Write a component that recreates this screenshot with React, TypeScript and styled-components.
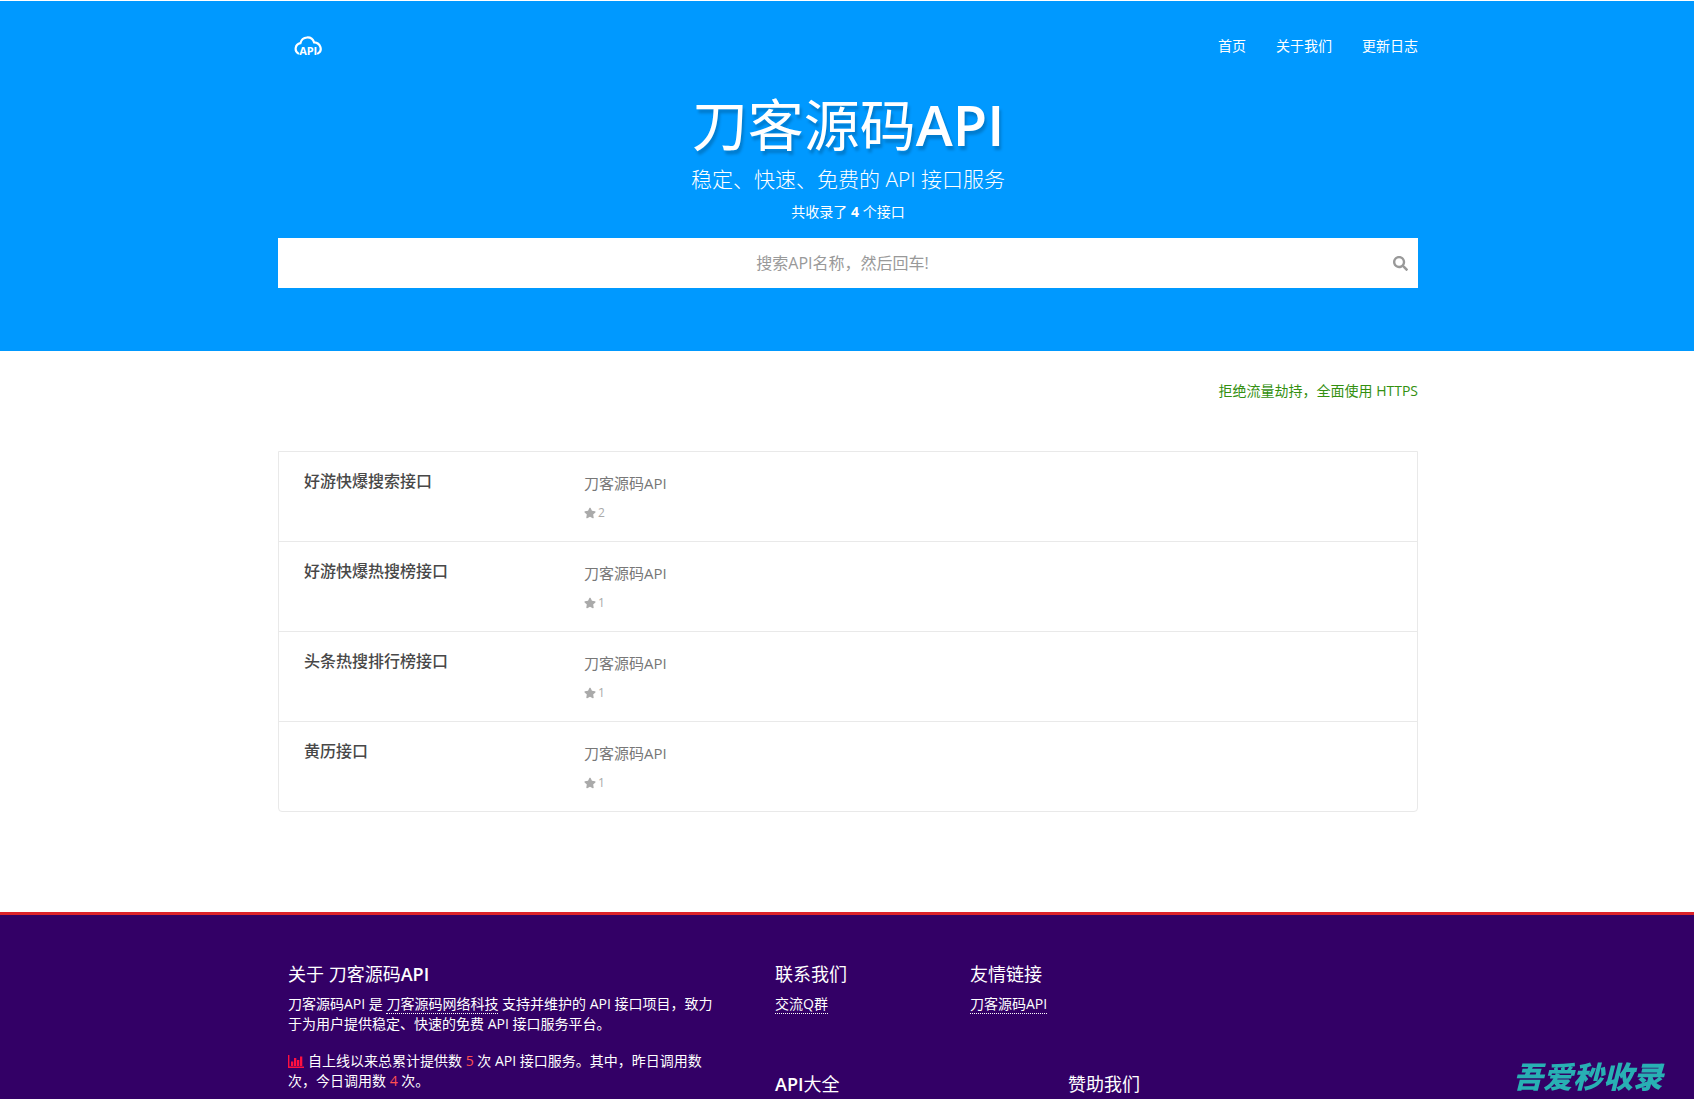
import React from "react";
import styled, { createGlobalStyle } from "styled-components";
import { FaSearch, FaStar } from "react-icons/fa";

const GlobalStyle = createGlobalStyle`
  *, *::before, *::after { box-sizing: border-box; }
  body {
    margin: 0;
    background: #fff;
    color: #444;
    font-family: "Open Sans", "Noto Sans CJK SC", sans-serif;
    font-size: 14px;
    line-height: 20px;
  }
  h1, h2, h3, p, ul { margin: 0; padding: 0; }
`;

const Page = styled.div`
  display: flex;
  flex-direction: column;
  min-height: 100vh;
`;

const Container = styled.div`
  width: 100%;
  max-width: 1142px;
  margin: 0 auto;
  padding-left: 2px;
`;

const Hero = styled.header`
  border-top: 1px solid #fff;
  padding-bottom: 63px;
  background: #0099ff;
  color: #fff;
`;

const TopBar = styled.div`
  display: flex;
  align-items: center;
  justify-content: space-between;
  height: 90px;
  padding-left: 15px;
`;

const LogoLink = styled.a`
  display: flex;
  color: #fff;
`;

const Nav = styled.nav`
  display: flex;
  gap: 30px;
`;

const NavLink = styled.a`
  color: #fff;
  text-decoration: none;
`;

const Intro = styled.div`
  display: flex;
  flex-direction: column;
  align-items: center;
  text-align: center;
`;

const Title = styled.h1`
  margin-bottom: 4px;
  font-size: 56px;
  line-height: 66px;
  font-weight: 400;
  text-shadow: 2px 4px 3px rgba(0, 0, 0, 0.2);

  span { font-weight: 600; }
`;

const Subtitle = styled.p`
  font-size: 21px;
  line-height: 36px;
  font-weight: 300;
`;

const Count = styled.p`
  line-height: 30px;
`;

const SearchForm = styled.form`
  display: flex;
  align-items: center;
  height: 50px;
  margin-top: 11px;
  padding-right: 8px;
  background: #fff;
`;

const SearchInput = styled.input`
  flex: 1;
  min-width: 0;
  height: 100%;
  padding: 0 0 0 16px;
  border: 0;
  outline: 0;
  background: transparent;
  color: #444;
  font: inherit;
  font-size: 16px;
  text-align: center;

  &::placeholder { color: #999; opacity: 1; }
`;

const SearchButton = styled.button`
  display: flex;
  padding: 2px;
  border: 0;
  background: none;
  color: #999;
  font-size: 15px;
`;

const Main = styled.main`
  flex: 1;
  padding: 30px 0 100px;
`;

const Notice = styled.p`
  margin-bottom: 50px;
  color: #339010;
  text-align: right;
`;

const ApiList = styled.ul`
  border: 1px solid #e9e9e9;
  border-radius: 0 0 4px 4px;
  list-style: none;
`;

const ApiRow = styled.li`
  display: grid;
  grid-template-columns: 280px 1fr;
  height: 90px;
  padding: 19px 25px 0;

  & + & { border-top: 1px solid #e9e9e9; }
  &:first-child { height: 89px; }
`;

const ApiName = styled.a`
  color: #484848;
  font-size: 16px;
  line-height: 20px;
  font-weight: 500;
  text-decoration: none;
`;

const ApiInfo = styled.div`
  padding-top: 2px;
  color: #777;
  font-size: 15px;
`;

const Stars = styled.div`
  display: flex;
  align-items: center;
  gap: 2px;
  margin-top: 10px;
  color: #aaa;
  font-size: 12px;
`;

const Footer = styled.footer`
  padding: 47px 0 3px;
  border-top: 3px solid #dc2229;
  background: #330066;
  color: #fff;
`;

const FooterGrid = styled(Container)`
  display: grid;
  grid-template-columns: 487px 1fr;
  padding-left: 12px;
`;

const About = styled.section`
  padding-right: 60px;
`;

const LinkGrid = styled.div`
  display: grid;
  grid-template-rows: 110px auto;
`;

const LinkRow = styled.div<{ $first: number }>`
  display: grid;
  grid-template-columns: ${(p) => p.$first}px 1fr;
`;

const FooterTitle = styled.h3`
  margin-bottom: 8px;
  font-size: 18px;
  line-height: 24px;
  font-weight: 400;

  span { font-weight: 600; }
`;

const Paragraph = styled.p`
  & + & { margin-top: 17px; }
`;

const DottedLink = styled.a`
  border-bottom: 1px dotted #fff;
  color: #fff;
  text-decoration: none;
`;

const Figure = styled.span`
  color: #ff5050;
`;

const ChartSvg = styled.svg`
  margin-right: 4px;
  vertical-align: -2px;
`;

const Watermark = styled.div`
  position: fixed;
  right: 31px;
  bottom: 7px;
  color: #28b0b4;
  font-size: 30px;
  line-height: 30px;
  font-style: italic;
  font-weight: 900;
`;

const CloudLogo = () => (
  <svg width="30" height="24" viewBox="0 0 30 24" role="img" aria-label="API">
    <path
      d="M5.2 19.4C1.4 17.2 1.7 10.4 7.4 9.2C9.2 1.9 18.8 1.5 21.1 8.4C27.9 8.9 29.8 16.8 25 19.4"
      fill="none"
      stroke="currentColor"
      strokeWidth="2.2"
      strokeLinecap="round"
    />
    <text x="15.2" y="21" fill="currentColor" fontSize="11" fontWeight="700" textAnchor="middle">
      API
    </text>
  </svg>
);

const ChartIcon = () => (
  <ChartSvg width="16" height="13" viewBox="0 0 16 13" fill="#ff1040" aria-hidden="true">
    <path d="M0 0h1.4v11.6H16V13H0zM3 6.5h2.3V11H3zM6 3h2.3v8H6zM9 5h2.3v6H9zM12 1.5h2.3V11H12z" />
  </ChartSvg>
);

const navItems = ["首页", "关于我们", "更新日志"];

const apis = [
  { name: "好游快爆搜索接口", stars: 2 },
  { name: "好游快爆热搜榜接口", stars: 1 },
  { name: "头条热搜排行榜接口", stars: 1 },
  { name: "黄历接口", stars: 1 },
];

export default function App() {
  return (
    <Page lang="zh-CN">
      <GlobalStyle />
      <Hero>
        <Container>
          <TopBar>
            <LogoLink href="#">
              <CloudLogo />
            </LogoLink>
            <Nav>
              {navItems.map((item) => (
                <NavLink href="#" key={item}>{item}</NavLink>
              ))}
            </Nav>
          </TopBar>
          <Intro>
            <Title>刀客源码<span>API</span></Title>
            <Subtitle>稳定、快速、免费的 API 接口服务</Subtitle>
            <Count>共收录了 <strong>4</strong> 个接口</Count>
          </Intro>
          <SearchForm role="search" onSubmit={(e) => e.preventDefault()}>
            <SearchInput type="text" aria-label="搜索API名称" placeholder="搜索API名称，然后回车!" />
            <SearchButton type="submit" aria-label="搜索">
              <FaSearch />
            </SearchButton>
          </SearchForm>
        </Container>
      </Hero>

      <Main>
        <Container>
          <Notice>拒绝流量劫持，全面使用 HTTPS</Notice>
          <ApiList>
            {apis.map((api) => (
              <ApiRow key={api.name}>
                <ApiName href="#">{api.name}</ApiName>
                <ApiInfo>
                  刀客源码API
                  <Stars><FaStar />{api.stars}</Stars>
                </ApiInfo>
              </ApiRow>
            ))}
          </ApiList>
        </Container>
      </Main>

      <Footer>
        <FooterGrid>
          <About>
            <FooterTitle>关于 刀客源码<span>API</span></FooterTitle>
            <Paragraph>
              刀客源码API 是 <DottedLink href="#">刀客源码网络科技</DottedLink> 支持并维护的 API 接口项目，致力于为用户提供稳定、快速的免费 API 接口服务平台。
            </Paragraph>
            <Paragraph>
              <ChartIcon />自上线以来总累计提供数 <Figure>5</Figure> 次 API 接口服务。其中，昨日调用数 次，今日调用数 <Figure>4</Figure> 次。
            </Paragraph>
          </About>
          <LinkGrid>
            <LinkRow $first={195}>
              <section>
                <FooterTitle>联系我们</FooterTitle>
                <DottedLink href="#">交流Q群</DottedLink>
              </section>
              <section>
                <FooterTitle>友情链接</FooterTitle>
                <DottedLink href="#">刀客源码API</DottedLink>
              </section>
            </LinkRow>
            <LinkRow $first={293}>
              <FooterTitle><span>API</span>大全</FooterTitle>
              <FooterTitle>赞助我们</FooterTitle>
            </LinkRow>
          </LinkGrid>
        </FooterGrid>
      </Footer>
      <Watermark>吾爱秒收录</Watermark>
    </Page>
  );
}
